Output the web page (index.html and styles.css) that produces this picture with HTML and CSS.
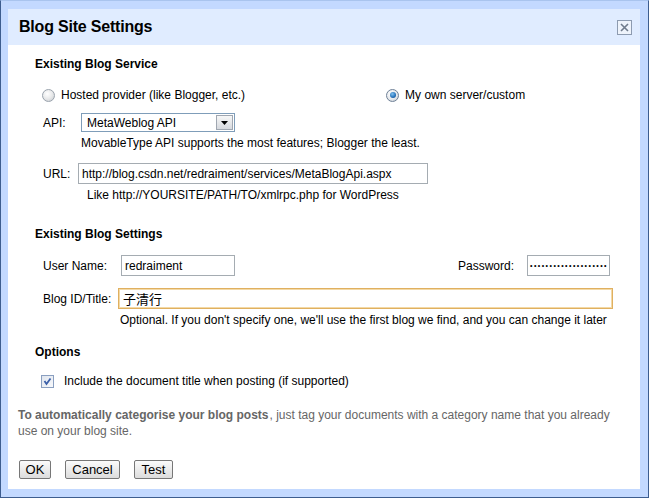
FILE: index.html
```html
<!DOCTYPE html>
<html>
<head>
<meta charset="utf-8">
<link rel="stylesheet" href="styles.css">
</head>
<body>
<div class="frame">
  <div class="dialog">
    <div class="titlebar">
      <span class="title">Blog Site Settings</span>
      <span class="close">
        <svg width="13" height="13" viewBox="0 0 13 13"><path d="M3 3 L10 10 M10 3 L3 10" stroke="#6f7b8c" stroke-width="1.6" fill="none"/></svg>
      </span>
    </div>
    <div class="body">
      <div class="heading h-first">Existing Blog Service</div>
      <div class="radio-row">
        <span class="radio"></span><span class="radio-label">Hosted provider (like Blogger, etc.)</span>
        <span class="radio on radio-right"></span><span class="radio-label">My own server/custom</span>
      </div>
      <div class="row row-api">
        <span class="label label-api">API:</span>
        <span class="select"><span class="select-text">MetaWeblog API</span><span class="select-btn"><svg width="7" height="4" viewBox="0 0 7 4"><path d="M0 0 L7 0 L3.5 4 Z" fill="#000"/></svg></span></span>
      </div>
      <div class="help help-api">MovableType API supports the most features; Blogger the least.</div>
      <div class="row row-url">
        <span class="label label-url">URL:</span>
        <input class="input input-url" value="http://blog.csdn.net/redraiment/services/MetaBlogApi.aspx" readonly>
      </div>
      <div class="help help-url">Like http://YOURSITE/PATH/TO/xmlrpc.php for WordPress</div>

      <div class="heading h-second">Existing Blog Settings</div>
      <div class="row row-user">
        <div class="group">
          <span class="label label-user">User Name:</span>
          <input class="input input-user" value="redraiment" readonly>
        </div>
        <div class="group">
          <span class="label label-pass">Password:</span>
          <span class="input input-pass">••••••••••••••••••••</span>
        </div>
      </div>
      <div class="row row-blog">
        <span class="label label-blog">Blog ID/Title:</span>
        <input class="input input-blog" value="子清行" readonly>
      </div>
      <div class="help help-blog">Optional. If you don't specify one, we'll use the first blog we find, and you can change it later</div>

      <div class="heading h-third">Options</div>
      <div class="check-row">
        <span class="check"><svg width="11" height="11" viewBox="0 0 11 11"><path d="M2.5 5 L4.5 8 L8.5 2.5" stroke="#3b5fa8" stroke-width="1.8" fill="none"/></svg></span>
        <span class="check-label">Include the document title when posting (if supported)</span>
      </div>

      <p class="note"><b class="note-strong">To automatically categorise your blog posts</b><span>, just tag your documents with a category name that you already use on your blog site.</span></p>

      <div class="buttons">
        <button class="btn btn-ok">OK</button>
        <button class="btn btn-cancel">Cancel</button>
        <button class="btn btn-test">Test</button>
      </div>
    </div>
  </div>
</div>
</body>
</html>
```
FILE: styles.css
```css
* { box-sizing: border-box; }
html, body { margin: 0; padding: 0; }
body {
  font-family: "Liberation Sans", Arial, "Noto Sans CJK SC", sans-serif;
  font-size: 12px;
  color: #000;
  background: #c3d9ff;
}
.frame {
  width: 649px;
  height: 498px;
  background: #c3d9ff;
  border: 1px solid #3d5d8f;
  border-top-color: #a9c4ee;
  padding: 8px 8px 8px 7px;
}
.dialog {
  background: #fff;
  height: 100%;
  display: flex;
  flex-direction: column;
}
.titlebar {
  height: 36px;
  background: #e0ecff;
  display: flex;
  align-items: center;
  justify-content: space-between;
  padding: 0 8px 0 11px;
}
.title {
  font-weight: bold;
  font-size: 16px;
  letter-spacing: -0.2px;
}
.close {
  width: 15px;
  height: 15px;
  border: 1px solid #8d9bb0;
  background: #eef3fb;
  display: flex;
  align-items: center;
  justify-content: center;
}
.body {
  padding: 0 0 0 10px;
  line-height: 16px;
}
.heading {
  font-weight: bold;
  padding-left: 17px;
}
.h-first { margin-top: 11px; }
.h-second { margin-top: 23px; }
.h-third { margin-top: 16px; }

.radio-row {
  display: flex;
  align-items: center;
  margin-top: 15px;
  height: 16px;
  padding-left: 24px;
}
.radio {
  width: 13px;
  height: 13px;
  border-radius: 50%;
  border: 1px solid #9aa3ad;
  background: radial-gradient(circle at 40% 35%, #ffffff 0%, #e8e9ea 50%, #c4c8cd 100%);
  flex: none;
  position: relative;
}
.radio.on {
  border-color: #6f8197;
  background: radial-gradient(circle at 40% 35%, #ffffff 0%, #e3e6ea 60%, #b9c1cb 100%);
}
.radio.on::after {
  content: "";
  position: absolute;
  left: 2.5px;
  top: 2.5px;
  width: 6px;
  height: 6px;
  border-radius: 50%;
  background: radial-gradient(circle at 40% 35%, #7fc0f0 0%, #2470b8 60%, #173f7a 100%);
}
.radio-label { margin-left: 6px; }
.radio-right { margin-left: 141px; }

.row {
  display: flex;
  align-items: center;
  padding-left: 25px;
}
.label { flex: none; }
.row-api { margin-top: 10px; height: 19px; }
.label-api { width: 38px; }
.select {
  width: 154px;
  height: 19px;
  border: 1px solid #7f9db9;
  display: flex;
  align-items: center;
  justify-content: space-between;
  padding: 0 1px 0 5px;
}
.select-btn {
  width: 17px;
  height: 15px;
  border: 1px solid #a0a7b1;
  background: linear-gradient(#f7f7f7, #d6d9de);
  display: flex;
  align-items: center;
  justify-content: center;
}
.help { padding-left: 63px; }
.help-api { margin-top: 3px; }
.help-url { margin-top: 3px; padding-left: 69px; }
.row-url { margin-top: 12px; height: 21px; }
.label-url { width: 35px; }

.input {
  font-family: "Liberation Sans", Arial, "Noto Sans CJK SC", sans-serif;
  font-size: 12px;
  color: #000;
  height: 21px;
  border: 1px solid #a5acb2;
  background: #fff;
  padding: 0 3px;
  margin: 0;
  outline: none;
  border-radius: 0;
}
.input-url { width: 350px; }

.row-user {
  margin-top: 13px;
  height: 21px;
  justify-content: space-between;
  padding-right: 30px;
}
.group { display: flex; align-items: center; }
.label-user { width: 78px; }
.input-user { width: 114px; }
.label-pass { width: 69px; }
.input-pass {
  width: 83px;
  display: flex;
  align-items: center;
  font-size: 7px;
  letter-spacing: 1.45px;
  overflow: hidden;
  padding: 0 2px;
  white-space: nowrap;
}
.row-blog { margin-top: 12px; height: 21px; }
.label-blog { width: 75px; }
.input-blog {
  width: 495px;
  border: 1px solid #e0b060;
  box-shadow: inset 0 0 0 1px #f3d9a6;
  padding-left: 4px;
  font-size: 13px;
}
.help-blog { margin-top: 3px; padding-left: 102px; }

.check-row {
  display: flex;
  align-items: center;
  margin-top: 13px;
  height: 16px;
  padding-left: 23px;
}
.check {
  width: 13px;
  height: 13px;
  border: 1px solid #8a9fc0;
  background: linear-gradient(135deg, #dfe5ee, #f8f9fb);
  display: flex;
  align-items: center;
  justify-content: center;
  flex: none;
}
.check-label { margin-left: 10px; }

.note {
  margin: 18px 0 0 0;
  color: #666;
  line-height: 16px;
  padding-right: 20px;
}
.note-strong { color: #666; margin-right: 1px; }

.buttons {
  margin-top: 21px;
  display: flex;
  gap: 14px;
  padding-left: 1px;
}
.btn {
  font-family: "Liberation Sans", Arial, sans-serif;
  font-size: 13px;
  height: 19px;
  padding: 0 6px;
  border: 1px solid #777;
  border-radius: 2px;
  background: linear-gradient(#fbfbfb, #dcdcdc);
  color: #000;
  line-height: 17px;
  margin: 0;
}
.btn-ok { width: 32px; padding: 0; }
.btn-cancel { width: 55px; padding: 0; }
.btn-test { width: 39px; padding: 0; }
```
